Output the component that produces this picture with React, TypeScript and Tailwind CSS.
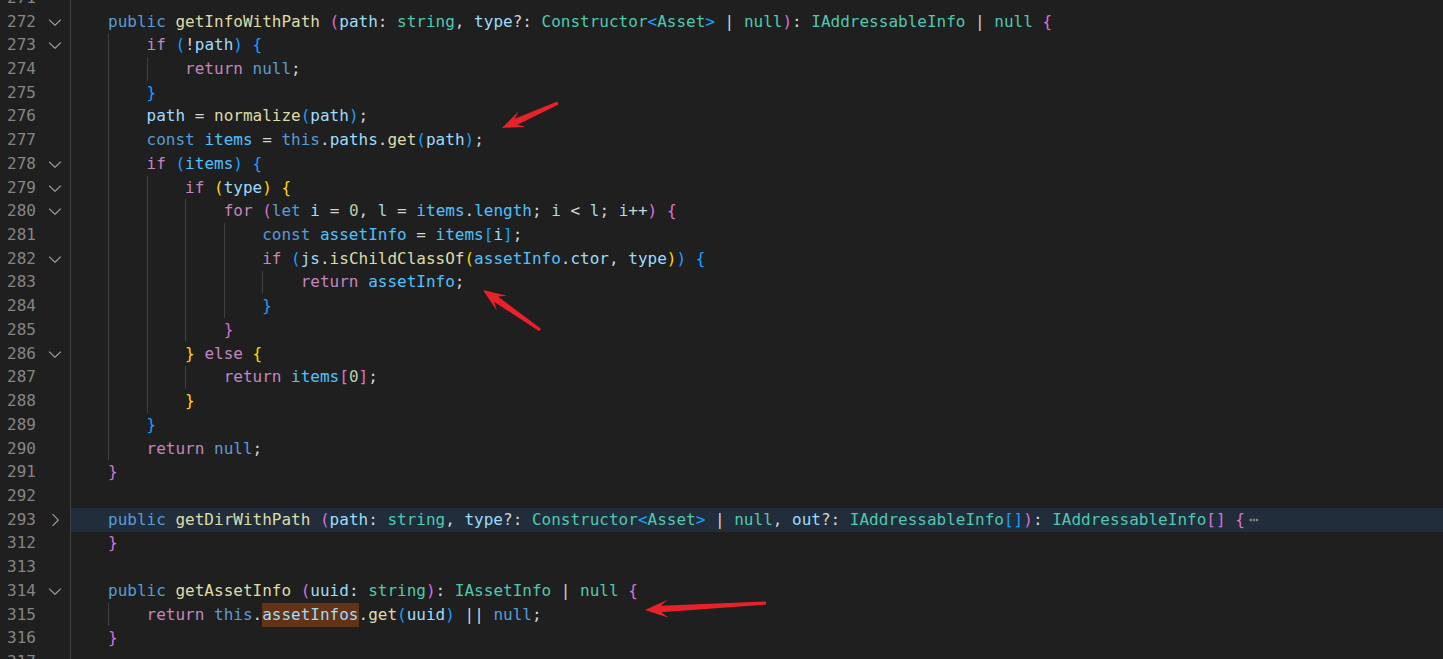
type Tok = [string, string] | [string, string, string];

// token colours (Dark Modern + bracket pair colours)
const kw = "text-[#569cd6]";
const ctl = "text-[#c586c0]";
const fn = "text-[#dcdcaa]";
const va = "text-[#9cdcfe]";
const cst = "text-[#4fc1ff]";
const ty = "text-[#4ec9b0]";
const num = "text-[#b5cea8]";
const pu = "text-[#d4d4d4]";
const b1 = "text-[#ffd700]";
const b2 = "text-[#da70d6]";
const b3 = "text-[#179fff]";

type Line = {
  n: number;
  guides: number;
  fold?: "down" | "right";
  active?: boolean;
  toks?: Tok[];
  folded?: boolean;
};

const lines: Line[] = [
  { n: 271, guides: 1 },
  {
    n: 272,
    guides: 1,
    fold: "down",
    toks: [
      ["public", kw], [" ", pu], ["getInfoWithPath", fn], [" ", pu], ["(", b2],
      ["path", va], [": ", pu], ["string", ty], [", ", pu], ["type", va], ["?: ", pu],
      ["Constructor", ty], ["<", b3], ["Asset", ty], [">", b3], [" | ", pu], ["null", ty],
      [")", b2], [": ", pu], ["IAddressableInfo", ty], [" | ", pu], ["null", ty], [" ", pu], ["{", b2],
    ],
  },
  {
    n: 273,
    guides: 2,
    fold: "down",
    toks: [["if", ctl], [" ", pu], ["(", b3], ["!", pu], ["path", va], [")", b3], [" ", pu], ["{", b3]],
  },
  { n: 274, guides: 3, toks: [["return", ctl], [" ", pu], ["null", kw], [";", pu]] },
  { n: 275, guides: 2, toks: [["}", b3]] },
  {
    n: 276,
    guides: 2,
    toks: [["path", va], [" = ", pu], ["normalize", fn], ["(", b3], ["path", va], [")", b3], [";", pu]],
  },
  {
    n: 277,
    guides: 2,
    toks: [
      ["const", kw], [" ", pu], ["items", cst], [" = ", pu], ["this", kw], [".", pu], ["paths", va],
      [".", pu], ["get", fn], ["(", b3], ["path", va], [")", b3], [";", pu],
    ],
  },
  {
    n: 278,
    guides: 2,
    fold: "down",
    toks: [["if", ctl], [" ", pu], ["(", b3], ["items", cst], [")", b3], [" ", pu], ["{", b3]],
  },
  {
    n: 279,
    guides: 3,
    fold: "down",
    toks: [["if", ctl], [" ", pu], ["(", b1], ["type", va], [")", b1], [" ", pu], ["{", b1]],
  },
  {
    n: 280,
    guides: 4,
    fold: "down",
    toks: [
      ["for", ctl], [" ", pu], ["(", b2], ["let", kw], [" ", pu], ["i", va], [" = ", pu], ["0", num],
      [", ", pu], ["l", va], [" = ", pu], ["items", cst], [".", pu], ["length", cst], ["; ", pu],
      ["i", va], [" < ", pu], ["l", va], ["; ", pu], ["i", va], ["++", pu], [")", b2], [" ", pu], ["{", b2],
    ],
  },
  {
    n: 281,
    guides: 5,
    toks: [
      ["const", kw], [" ", pu], ["assetInfo", cst], [" = ", pu], ["items", cst], ["[", b3], ["i", va],
      ["]", b3], [";", pu],
    ],
  },
  {
    n: 282,
    guides: 5,
    fold: "down",
    toks: [
      ["if", ctl], [" ", pu], ["(", b3], ["js", va], [".", pu], ["isChildClassOf", fn], ["(", b1],
      ["assetInfo", cst], [".", pu], ["ctor", va], [", ", pu], ["type", va], [")", b1], [")", b3],
      [" ", pu], ["{", b3],
    ],
  },
  { n: 283, guides: 6, toks: [["return", ctl], [" ", pu], ["assetInfo", cst], [";", pu]] },
  { n: 284, guides: 5, toks: [["}", b3]] },
  { n: 285, guides: 4, toks: [["}", b2]] },
  {
    n: 286,
    guides: 3,
    fold: "down",
    toks: [["}", b1], [" ", pu], ["else", ctl], [" ", pu], ["{", b1]],
  },
  {
    n: 287,
    guides: 4,
    toks: [["return", ctl], [" ", pu], ["items", cst], ["[", b2], ["0", num], ["]", b2], [";", pu]],
  },
  { n: 288, guides: 3, toks: [["}", b1]] },
  { n: 289, guides: 2, toks: [["}", b3]] },
  { n: 290, guides: 2, toks: [["return", ctl], [" ", pu], ["null", kw], [";", pu]] },
  { n: 291, guides: 1, toks: [["}", b2]] },
  { n: 292, guides: 1 },
  {
    n: 293,
    guides: 1,
    fold: "right",
    active: true,
    folded: true,
    toks: [
      ["public", kw], [" ", pu], ["getDirWithPath", fn], [" ", pu], ["(", b2], ["path", va], [": ", pu],
      ["string", ty], [", ", pu], ["type", va], ["?: ", pu], ["Constructor", ty], ["<", b3],
      ["Asset", ty], [">", b3], [" | ", pu], ["null", ty], [", ", pu], ["out", va], ["?: ", pu],
      ["IAddressableInfo", ty], ["[", b3], ["]", b3], [")", b2], [": ", pu], ["IAddressableInfo", ty],
      ["[", b2], ["]", b2], [" ", pu], ["{", b2],
    ],
  },
  { n: 312, guides: 1, toks: [["}", b2]] },
  { n: 313, guides: 1 },
  {
    n: 314,
    guides: 1,
    fold: "down",
    toks: [
      ["public", kw], [" ", pu], ["getAssetInfo", fn], [" ", pu], ["(", b2], ["uuid", va], [": ", pu],
      ["string", ty], [")", b2], [": ", pu], ["IAssetInfo", ty], [" | ", pu], ["null", ty], [" ", pu],
      ["{", b2],
    ],
  },
  {
    n: 315,
    guides: 2,
    toks: [
      ["return", ctl], [" ", pu], ["this", kw], [".", pu], ["assetInfos", va, "bg-[#623315]"], [".", pu],
      ["get", fn], ["(", b3], ["uuid", va], [")", b3], [" || ", pu], ["null", kw], [";", pu],
    ],
  },
  { n: 316, guides: 1, toks: [["}", b2]] },
  { n: 317, guides: 1 },
];

function Chevron({ dir }: { dir: "down" | "right" }) {
  return (
    <svg width="20" height="20" viewBox="0 0 16 16" fill="#a3a3a3">
      {dir === "down" ? (
        <path d="M7.976 10.072l4.357-4.357.62.618L8.284 11h-.618L3 6.333l.619-.618 4.357 4.357z" />
      ) : (
        <path d="M10.072 8.024L5.715 3.667l.618-.62L11 7.716v.618L6.333 13l-.618-.619 4.357-4.357z" />
      )}
    </svg>
  );
}

function Row({ line }: { line: Line }) {
  return (
    <div className="flex h-[23.73px] items-center">
      {/* gutter */}
      <div className="w-[36px] shrink-0 text-right text-[#858585]">{line.n}</div>
      <div className="flex w-[33.5px] shrink-0 items-center pl-[9px]">
        {line.fold && <Chevron dir={line.fold} />}
      </div>

      {/* code */}
      <div
        className={`flex h-full flex-1 items-center whitespace-pre ${line.active ? "bg-[#212d3a]" : ""}`}
      >
        {Array.from({ length: line.guides }).map((_, i) => (
          <span key={i} className="h-full w-[4ch] shrink-0 border-l border-[#404040]" />
        ))}
        {line.toks?.map(([t, c, bg], i) => (
          <span key={i} className={`${c} ${bg ?? ""}`}>
            {t}
          </span>
        ))}
        {line.folded && <span className="ml-[4px] text-[#8c8c8c]">⋯</span>}
      </div>
    </div>
  );
}

function arrow(
  tail: [number, number],
  tip: [number, number],
  headLen: number,
  headW: number,
  wTail: number,
  wNeck: number,
) {
  const dx = tip[0] - tail[0];
  const dy = tip[1] - tail[1];
  const len = Math.hypot(dx, dy);
  const ux = dx / len;
  const uy = dy / len;
  const nx = -uy;
  const ny = ux;
  const pt = (along: number, side: number) =>
    `${(tip[0] - ux * along + nx * side).toFixed(1)},${(tip[1] - uy * along + ny * side).toFixed(1)}`;
  return [
    pt(len, wTail / 2),
    pt(headLen * 0.7, wNeck / 2),
    pt(headLen, headW / 2),
    pt(0, 0),
    pt(headLen, -headW / 2),
    pt(headLen * 0.7, -wNeck / 2),
    pt(len, -wTail / 2),
  ].join(" ");
}

function App() {
  return (
    <div className="relative h-[659px] w-full overflow-hidden bg-[#1f1f1f] font-['DejaVu_Sans_Mono',monospace] text-[16px]">
      {/* Editor lines */}
      <div className="-mt-[14px] flex flex-col">
        {lines.map((l) => (
          <Row key={l.n} line={l} />
        ))}
      </div>

      {/* Red annotation arrows */}
      <svg className="pointer-events-none absolute inset-0" width="1443" height="659">
        <polygon points={arrow([558, 103], [502, 128], 22, 17, 3, 6.5)} fill="#e8222a" />
        <polygon points={arrow([540, 330], [483, 290], 23, 18, 3, 6.5)} fill="#e8222a" />
        <polygon points={arrow([766, 603], [645, 610], 23, 18, 3, 6.5)} fill="#e8222a" />
      </svg>
    </div>
  );
}

export default App;
